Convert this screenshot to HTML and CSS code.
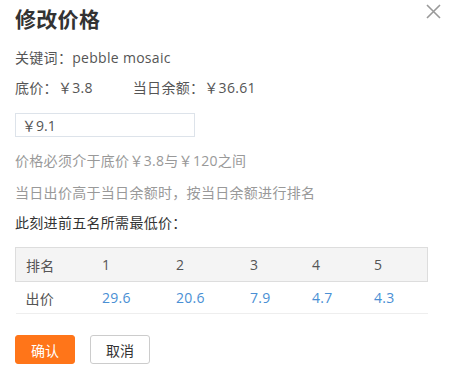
FILE: index.html
```html
<!DOCTYPE html>
<html lang="zh-CN">
<head>
    <meta charset="UTF-8">
    <title>修改价格</title>
    <link rel="stylesheet" href="styles.css">
</head>
<body>
    <div class="dialog">
        <div class="dialog-head">
            <h2>修改价格</h2>
            <span class="close">
                <svg width="15" height="15" viewBox="0 0 15 15"><path d="M1 1 L14 14 M14 1 L1 14" stroke="#999" stroke-width="1.6" fill="none"/></svg>
            </span>
        </div>
        <p class="line first">关键词：pebble mosaic</p>
        <p class="line">底价：￥3.8<span class="balance">当日余额：￥36.61</span></p>
        <input class="price-input" type="text" value="￥9.1">
        <p class="tip">价格必须介于底价￥3.8与￥120之间</p>
        <p class="tip">当日出价高于当日余额时，按当日余额进行排名</p>
        <p class="line dark">此刻进前五名所需最低价：</p>
        <table class="rank">
            <tr class="rank-head">
                <td>排名</td><td>1</td><td>2</td><td>3</td><td>4</td><td>5</td>
            </tr>
            <tr class="rank-row">
                <td>出价</td><td>29.6</td><td>20.6</td><td>7.9</td><td>4.7</td><td>4.3</td>
            </tr>
        </table>
        <div class="actions">
            <button class="btn btn-primary">确认</button>
            <button class="btn">取消</button>
        </div>
    </div>
</body>
</html>
```

FILE: styles.css
```css
body {
    margin: 0;
    background: #fff;
    font-family: "Open Sans", "Noto Sans CJK SC", sans-serif;
    font-size: 14px;
    letter-spacing: 0.3px;
    color: #555;
}
.dialog {
    padding: 0 25px 0 15px;
}
.dialog-head {
    display: flex;
    justify-content: space-between;
    align-items: flex-start;
    height: 40px;
}
h2 {
    margin: 3px 0 0;
    font-family: "Noto Sans CJK SC", sans-serif;
    font-size: 21px;
    line-height: 30px;
    font-weight: bold;
    color: #333;
}
.close {
    margin: 4px -13px 0 0;
}
.line {
    margin: 10px 0 0;
    line-height: 20px;
}
.line.first {
    margin-top: 8px;
}
.balance {
    margin-left: 40px;
}
.dark {
    color: #333;
}
.price-input {
    display: block;
    box-sizing: border-box;
    width: 180px;
    height: 24px;
    margin: 15px 0 14px;
    padding: 0 6px;
    border: 1px solid #dde3ea;
    font-family: inherit;
    font-size: 14px;
    color: #555;
    outline: none;
}
.tip {
    margin: 0 0 12px;
    line-height: 20px;
    color: #999;
}
.tip + .line {
    margin-top: -2px;
}
.rank {
    width: 413px;
    margin-top: 14px;
    border-collapse: collapse;
}
.rank td {
    padding: 0 10px;
    text-align: left;
}
.rank-head {
    background: #f4f4f4;
    height: 34px;
    color: #555;
}
.rank-head td {
    border-top: 1px solid #ddd;
    border-bottom: 1px solid #ddd;
}
.rank-head td:first-child {
    border-left: 1px solid #ddd;
}
.rank-head td:last-child {
    border-right: 1px solid #ddd;
}
.rank-row {
    height: 32px;
}
.rank-row td {
    border-bottom: 1px solid #eee;
    color: #4a8fd4;
}
.rank-row td:first-child {
    color: #555;
}
.rank td:nth-child(1) { width: 56px; }
.rank td:nth-child(2) { width: 54px; }
.rank td:nth-child(3) { width: 54px; }
.rank td:nth-child(4) { width: 42px; }
.rank td:nth-child(5) { width: 42px; }
.actions {
    display: flex;
    gap: 15px;
    margin-top: 21px;
}
.btn {
    width: 60px;
    height: 29px;
    border: 1px solid #ccc;
    border-radius: 3px;
    background: #fff;
    font-family: "Noto Sans CJK SC", sans-serif;
    font-size: 14px;
    color: #333;
    padding: 0;
}
.btn-primary {
    background: #ff7519;
    border-color: #ff7519;
    color: #fff;
}
```
